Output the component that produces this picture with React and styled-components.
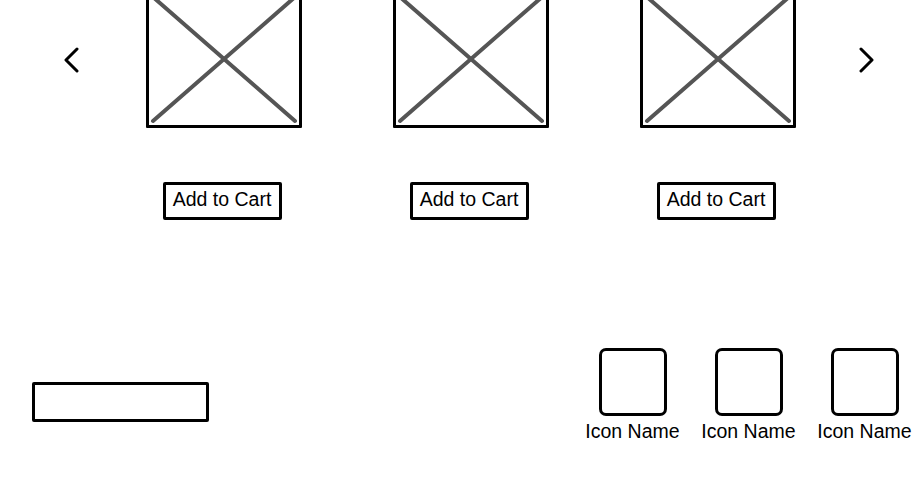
import React from 'react';
import styled, { createGlobalStyle } from 'styled-components';

const GlobalStyle = createGlobalStyle`
  html, body {
    margin: 0;
    padding: 0;
    background: #fff;
  }
  body {
    font-family: "Liberation Sans", Arial, sans-serif;
    color: #000;
  }
`;

const Page = styled.div`
  width: 916px;
  height: 481px;
  overflow: hidden;
  position: relative;
`;

// top carousel row, scrolled a little so the images are cut at the top
const Carousel = styled.div`
  display: flex;
  align-items: flex-start;
  padding-left: 64px;
  margin-top: -10px;
`;

const Chevron = styled.button`
  width: 16px;
  height: 26px;
  margin-top: 57px;
  margin-left: ${(p) => p.$offset || 0}px;
  padding: 0;
  border: none;
  background: none;
  display: flex;
  cursor: pointer;
`;

const ProductList = styled.div`
  display: flex;
  gap: 91px;
  margin-left: 66px;
`;

const Product = styled.div`
  display: flex;
  flex-direction: column;
  align-items: center;
  width: 156px;
`;

const ImageBox = styled.div`
  width: 156px;
  height: 138px;
  box-sizing: border-box;
  border: 3px solid #000;
  border-radius: 1px;
  display: flex;
`;

const CartButton = styled.button`
  margin-top: 54px;
  margin-right: 4px;
  width: 119px;
  height: 38px;
  box-sizing: border-box;
  border: 3px solid #000;
  border-radius: 2px;
  background: #fff;
  font-family: "Liberation Sans", Arial, sans-serif;
  font-size: 19.5px;
  line-height: 1;
  color: #000;
  padding: 0 0 2px;
  display: flex;
  align-items: center;
  justify-content: center;
  cursor: pointer;
`;

const BottomRow = styled.div`
  display: flex;
  justify-content: space-between;
  align-items: flex-start;
  margin-top: 128px;
  padding-left: 32px;
  padding-right: 1px;
`;

const InputBar = styled.div`
  margin-top: 34px;
  width: 177px;
  height: 40px;
  box-sizing: border-box;
  border: 3px solid #000;
  border-radius: 2px;
`;

const IconList = styled.div`
  display: flex;
  gap: 15px;
`;

const IconItem = styled.div`
  width: 101px;
  display: flex;
  flex-direction: column;
  align-items: center;
`;

const IconBox = styled.div`
  width: 68px;
  height: 68px;
  box-sizing: border-box;
  border: 3px solid #000;
  border-radius: 7px;
`;

const IconLabel = styled.span`
  margin-top: 4px;
  font-size: 19.5px;
  line-height: 22px;
  white-space: nowrap;
`;

const PlaceholderX = () => (
  <svg width="150" height="132" viewBox="0 0 150 132">
    <g stroke="#555" strokeWidth="4" strokeLinecap="round">
      <line x1="4" y1="4" x2="146" y2="128" />
      <line x1="146" y1="4" x2="4" y2="128" />
    </g>
  </svg>
);

const ChevronIcon = ({ dir }) => (
  <svg width="16" height="26" viewBox="0 0 16 26">
    <polyline
      points={dir === 'left' ? '13,2 2,13 13,24' : '3,2 14,13 3,24'}
      fill="none"
      stroke="#000"
      strokeWidth="3"
      strokeLinecap="round"
      strokeLinejoin="round"
    />
  </svg>
);

const products = [1, 2, 3];
const icons = ['Icon Name', 'Icon Name', 'Icon Name'];

export default function App() {
  return (
    <Page>
      <GlobalStyle />
      <Carousel>
        <Chevron aria-label="Previous">
          <ChevronIcon dir="left" />
        </Chevron>
        <ProductList>
          {products.map((p) => (
            <Product key={p}>
              <ImageBox>
                <PlaceholderX />
              </ImageBox>
              <CartButton>Add to Cart</CartButton>
            </Product>
          ))}
        </ProductList>
        <Chevron aria-label="Next" $offset={62}>
          <ChevronIcon dir="right" />
        </Chevron>
      </Carousel>
      <BottomRow>
        <InputBar />
        <IconList>
          {icons.map((name, i) => (
            <IconItem key={i}>
              <IconBox />
              <IconLabel>{name}</IconLabel>
            </IconItem>
          ))}
        </IconList>
      </BottomRow>
    </Page>
  );
}
